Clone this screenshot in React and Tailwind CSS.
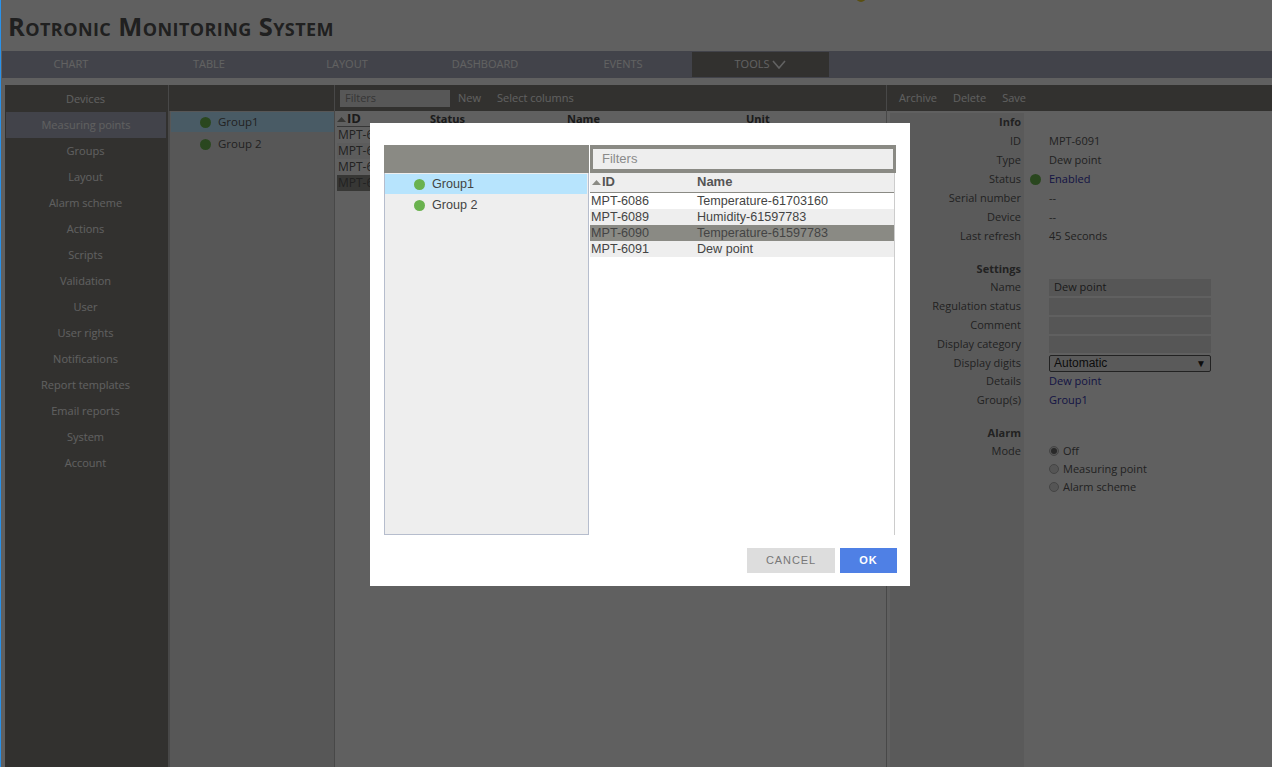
import React from 'react'

const menu = ['Devices', 'Measuring points', 'Groups', 'Layout', 'Alarm scheme', 'Actions', 'Scripts', 'Validation', 'User', 'User rights', 'Notifications', 'Report templates', 'Email reports', 'System', 'Account']
const tabs = ['Chart', 'Table', 'Layout', 'Dashboard', 'Events']
const points = [
  ['MPT-6086', 'Temperature-61703160'],
  ['MPT-6089', 'Humidity-61597783'],
  ['MPT-6090', 'Temperature-61597783'],
  ['MPT-6091', 'Dew point'],
]

const details = [
  { label: 'Info', head: true },
  { label: 'ID', value: 'MPT-6091' },
  { label: 'Type', value: 'Dew point' },
  { label: 'Status', value: 'Enabled', link: true, dot: true },
  { label: 'Serial number', value: '--' },
  { label: 'Device', value: '--' },
  { label: 'Last refresh', value: '45 Seconds' },
  { gap: true },
  { label: 'Settings', head: true, short: true },
  { label: 'Name', input: 'Dew point' },
  { label: 'Regulation status', input: '' },
  { label: 'Comment', input: '' },
  { label: 'Display category', input: '' },
  { label: 'Display digits', select: true, short: true },
  { label: 'Details', value: 'Dew point', link: true },
  { label: 'Group(s)', value: 'Group1', link: true },
  { gap: true },
  { label: 'Alarm', head: true, short: true },
  { label: 'Mode', radio: 'Off', on: true, short: true },
  { radio: 'Measuring point', short: true },
  { radio: 'Alarm scheme', short: true },
]

const Dot = () => <span className="w-[11px] h-[11px] rounded-full bg-[#6ab24f] shrink-0" />

const Caret = () => (
  <svg width="9" height="5" viewBox="0 0 9 5" className="shrink-0"><polygon points="0,5 4.5,0 9,5" fill="#8a8a84" /></svg>
)

function GroupList({ second }) {
  return (
    <div className="flex flex-col">
      <div className="h-[20px] flex items-center pl-[29px] gap-[7px] bg-[#b7e4fd]"><Dot />Group1</div>
      <div className={second + ' flex items-center pl-[29px] gap-[7px]'}><Dot />Group 2</div>
    </div>
  )
}

function DetailValue({ row }) {
  if (row.input !== undefined) {
    return <div className="w-[162px] h-[17px] px-[5px] bg-[#d8d8d8] text-[#444] flex items-center">{row.input}</div>
  }
  if (row.select) {
    return (
      <div className="w-[162px] h-[17px] px-[4px] flex items-center justify-between bg-[#e2e2e2] border border-[#555] rounded-[2px] text-[#222] font-['Liberation_Sans',sans-serif] text-[12px]">
        Automatic<span className="text-[10px]">▼</span>
      </div>
    )
  }
  if (row.radio) {
    return (
      <div className="flex items-center gap-[4px]">
        <span className="w-[10px] h-[10px] rounded-full border border-[#aaa] bg-[#d5d5d5] flex items-center justify-center">
          {row.on && <span className="w-[6px] h-[6px] rounded-full bg-[#666]" />}
        </span>
        {row.radio}
      </div>
    )
  }
  return <span className={row.link ? 'text-[#3333aa]' : ''}>{row.value}</span>
}

export default function App() {
  return (
    <div className="relative w-full h-[767px] overflow-hidden bg-[#efefef] border-l-[1px] border-[#2a92ea] font-['Open_Sans',sans-serif] text-[11px] text-[#555]">
      {/* Header */}
      <div className="h-[51px] pl-[7px] pt-[11px] text-[25.5px] leading-[30px] font-bold [font-variant:small-caps] text-[#505050] tracking-[0.42px]">
        Rotronic Monitoring System
      </div>

      {/* Tabs */}
      <div className="h-[27px] ml-[1px] flex bg-[#a5a8b9] text-[#f4f4f4] uppercase">
        {tabs.map((t) => (
          <div key={t} className="w-[138px] flex items-center justify-center">{t}</div>
        ))}
        <div className="w-[137px] my-[1px] bg-[#7d7b76] flex items-center justify-center gap-[3px]">
          Tools
          <svg width="14" height="9" viewBox="0 0 14 9" fill="none" stroke="#f4f4f4" strokeWidth="1.6"><polyline points="1,1 7,8 13,1" /></svg>
        </div>
      </div>

      <div className="h-[689px] mt-[7px] flex pl-[4px]">
        {/* Left menu */}
        <div className="w-[163px] shrink-0 bg-[#7d7b76] text-[#f0f0f0] pt-[1px] flex flex-col items-stretch">
          {menu.map((m, i) => (
            <div key={m} className={i === 1 ? 'h-[26px] ml-[1px] mr-[2px] flex items-center justify-center bg-[#a5a8b9]' : 'h-[26px] mr-[2px] flex items-center justify-center'}>{m}</div>
          ))}
        </div>

        {/* Groups */}
        <div className="w-[167px] shrink-0 flex flex-col bg-[#dadada] border-l-[2px] border-r border-[#b4b4b4]">
          <div className="h-[26px] -ml-[1px] bg-[#7d7b76] shrink-0" />
          <div className="mt-[1px] pl-[1px] text-[#555] text-[11.5px]"><GroupList second="h-[24px]" /></div>
        </div>

        {/* Measuring points table */}
        <div className="w-[551px] shrink-0 flex flex-col">
          <div className="h-[26px] shrink-0 bg-[#7d7b76] flex items-center pl-[5px] text-[#f0f0f0]">
            <div className="w-[110px] h-[17px] px-[5px] flex items-center bg-[#d9d9d9] text-[#888] mr-[8px]">Filters</div>
            <span className="mr-[16px]">New</span>
            <span>Select columns</span>
          </div>
          <div className="pl-[2px] pr-[3px] pt-[1px]">
            <div className="h-[15px] flex items-center font-bold border-b border-[#888] text-[#444]">
              <div className="w-[93px] flex items-center gap-[1px]"><Caret /><span className="text-[13px]">ID</span></div>
              <div className="w-[137px]">Status</div>
              <div className="w-[179px]">Name</div>
              <div>Unit</div>
            </div>
            {points.map((p, i) => (
              <div key={p[0]} className={i === 3 ? 'h-[16px] flex items-center bg-[#8a8a84] text-[12px]' : i % 2 ? 'h-[16px] flex items-center bg-[#e6e6e6] text-[12px]' : 'h-[16px] flex items-center text-[12px]'}>
                <div className="pl-[1px]">{p[0]}</div>
              </div>
            ))}
          </div>
        </div>

        {/* Details */}
        <div className="flex-1 flex flex-col border-l border-[#b4b4b4]">
          <div className="h-[26px] shrink-0 bg-[#7d7b76] flex items-center pl-[12px] gap-[16px] text-[#f0f0f0]">
            <span>Archive</span><span>Delete</span><span>Save</span>
          </div>
          <div className="flex-1 flex pl-[3px] pt-[2px]">
            <div className="w-[134px] bg-[#e2e2e2] flex flex-col items-end pr-[3px]">
              {details.map((r, i) => r.gap
                ? <div key={i} className="h-[14px]" />
                : <div key={i} className={(r.short ? 'h-[18px]' : 'h-[19px]') + (r.head ? ' flex items-center font-bold' : ' flex items-center')}>{r.label}</div>)}
            </div>
            <div className="flex flex-col">
              {details.map((r, i) => r.gap
                ? <div key={i} className="h-[14px]" />
                : (
                  <div key={i} className={(r.short ? 'h-[18px]' : 'h-[19px]') + ' flex items-center'}>
                    <div className="w-[25px] flex items-center pl-[6px]">{r.dot && <Dot />}</div>
                    {!r.head && <DetailValue row={r} />}
                  </div>
                ))}
            </div>
          </div>
        </div>
      </div>

      {/* Top status dot, nearly cut off by the window edge */}
      <span className="absolute left-[855px] -top-[8px] w-[10px] h-[10px] rounded-full bg-[#e0c52c]" />

      {/* Dialog */}
      <div className="absolute inset-0 bg-black/60">
        <div className="ml-[369px] mt-[123px] w-[540px] h-[463px] bg-white pt-[22px] px-[14px] font-['Liberation_Sans',sans-serif] text-[12.6px] text-[#444]">
          <div className="flex h-[390px] gap-[1px]">
            <div className="w-[205px] flex flex-col">
              <div className="h-[28px] bg-[#8a8a84] shrink-0" />
              <div className="flex-1 bg-[#eeeeee] border-[1px] border-t-0 border-[#b6bdcd] pr-[1px] pt-[1px]">
                <GroupList second="h-[23px]" />
              </div>
            </div>
            <div className="w-[306px] flex flex-col">
              <div className="h-[28px] shrink-0 bg-[#8a8a84] px-[3px] py-[4px]">
                <div className="h-[20px] bg-[#eeeeee] px-[9px] flex items-center text-[13px] text-[#8a8a8a]">Filters</div>
              </div>
              <div className="flex-1 border-r border-[#cccccc] mr-[1px]">
                <div className="h-[20px] pb-[1px] flex items-center bg-[#eeeeee] border-b border-[#8a8a84] font-bold text-[13px] text-[#555]">
                  <div className="w-[107px] pl-[2px] flex items-center gap-[1px]"><Caret />ID</div>
                  <div>Name</div>
                </div>
                {points.map((p, i) => (
                  <div key={p[0]} className={i === 2 ? 'h-[16px] flex items-center bg-[#8a8a84]' : i % 2 ? 'h-[16px] flex items-center bg-[#eeeeee]' : 'h-[16px] flex items-center'}>
                    <div className="w-[107px] pl-[1px]">{p[0]}</div>
                    <div>{p[1]}</div>
                  </div>
                ))}
              </div>
            </div>
          </div>
          <div className="flex justify-end gap-[5px] mt-[13px] -mr-[1px] text-[11px] tracking-[0.9px]">
            <button className="w-[88px] h-[25px] bg-[#dddddd] text-[#777]">CANCEL</button>
            <button className="w-[57px] h-[25px] bg-[#4f80e5] text-white font-bold">OK</button>
          </div>
        </div>
      </div>
    </div>
  )
}
